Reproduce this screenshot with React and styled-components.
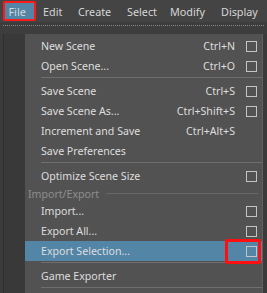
import React from "react";
import styled, { createGlobalStyle, css } from "styled-components";

const Global = createGlobalStyle`
  html, body { margin: 0; padding: 0; background: #3b3b3b; }
  body { font-family: "Noto Sans", "DejaVu Sans", sans-serif; font-size: 11px; color: #dcdcdc; overflow: hidden; }
`;

const Screen = styled.div`
  width: 267px;
  height: 293px;
  display: flex;
  flex-direction: column;
  background: #3b3b3b;
  overflow: hidden;
`;

const MenuBar = styled.div`
  height: 22px;
  background: #444444;
  display: flex;
  align-items: center;
  padding-left: 3px;
  flex: none;
`;

const Title = styled.div`
  height: 20px;
  box-sizing: border-box;
  display: flex;
  align-items: center;
  flex: none;
  width: ${(p) => (p.$w ? `${p.$w}px` : "auto")};
  font-size: 10.8px;
  color: #d6d6d6;
  white-space: nowrap;
  ${(p) =>
    p.$active &&
    css`
      background: #5285a6;
      border: 2.5px solid #ff1a1a;
      border-radius: 2px;
      padding-left: 3.5px;
      margin-right: 7px;
    `}
`;

const ToolStrip = styled.div`
  height: 12px;
  flex: none;
  background: #3d3d3d;
  padding: 3px 3px 0;
  box-sizing: border-box;
`;

const Dots = styled.div`
  border-top: 1px dotted #8a8a8a;
`;

const Body = styled.div`
  flex: 1;
  display: flex;
  min-height: 0;
`;

const Gutter = styled.div`
  width: 21px;
  margin-left: 3px;
  border-left: 1px solid #2f2f2f;
  background: #393939;
  flex: none;
`;

const Panel = styled.div`
  flex: 1;
  background: #525252;
  padding-top: 2px;
  display: flex;
  flex-direction: column;
`;

const Edge = styled.div`
  width: 4px;
  flex: none;
  background: #3a3a3a;
  border-left: 1px solid #5f5f5f;
`;

const Item = styled.div`
  height: 20px;
  flex: none;
  display: grid;
  grid-template-columns: 1fr auto 11px;
  align-items: center;
  padding: 0 5px 0 16px;
  column-gap: 11px;
  background: ${(p) => (p.$hl ? "#5285a6" : "transparent")};
  color: #dedede;
  font-size: 10.6px;
  white-space: nowrap;
`;

const Shortcut = styled.span`
  text-align: right;
`;

const BoxCell = styled.span`
  position: relative;
  width: 11px;
  height: 11px;
  ${(p) =>
    p.$marked &&
    css`
      &::after {
        content: "";
        position: absolute;
        left: -21px;
        right: -4px;
        top: -7px;
        bottom: -7px;
        border: 3px solid #ff1010;
        border-radius: 2px;
      }
    `}
`;

const Box = styled.span`
  display: block;
  box-sizing: border-box;
  width: 11px;
  height: 11px;
  border: 1px solid #c4c4c4;
`;

const Sep = styled.div`
  height: 5px;
  flex: none;
  margin-left: 16px;
  &::before {
    content: "";
    display: block;
    margin-top: 1px;
    height: 1px;
    background: #6e6e6e;
  }
`;

const Header = styled.div`
  height: 15px;
  flex: none;
  display: flex;
  align-items: center;
  gap: 7px;
  padding: 0 4px 0 3px;
  color: #8e8e8e;
  font-size: 10.6px;
  &::after {
    content: "";
    flex: 1;
    height: 1px;
    background: #666;
  }
`;

const menu = [
  ["File", 33],
  ["Edit", 35],
  ["Create", 49],
  ["Select", 43],
  ["Modify", 51],
  ["Display", 0],
];

const rows = [
  { t: "item", label: "New Scene", sc: "Ctrl+N", box: true },
  { t: "item", label: "Open Scene...", sc: "Ctrl+O", box: true },
  { t: "sep" },
  { t: "item", label: "Save Scene", sc: "Ctrl+S", box: true },
  { t: "item", label: "Save Scene As...", sc: "Ctrl+Shift+S", box: true },
  { t: "item", label: "Increment and Save", sc: "Ctrl+Alt+S" },
  { t: "item", label: "Save Preferences" },
  { t: "sep" },
  { t: "item", label: "Optimize Scene Size", box: true },
  { t: "head", label: "Import/Export" },
  { t: "item", label: "Import...", box: true },
  { t: "item", label: "Export All...", box: true },
  { t: "item", label: "Export Selection...", box: true, hl: true, mark: true },
  { t: "sep" },
  { t: "item", label: "Game Exporter" },
  { t: "sep" },
];

export default function App() {
  return (
    <Screen>
      <Global />
      <MenuBar>
        {menu.map(([m, w], i) => (
          <Title key={m} $active={i === 0} $w={w}>
            {m}
          </Title>
        ))}
      </MenuBar>
      <ToolStrip>
        <Dots />
      </ToolStrip>
      <Body>
        <Gutter />
        <Panel>
          {rows.map((r, i) => {
            if (r.t === "sep") return <Sep key={i} />;
            if (r.t === "head") return <Header key={i}>{r.label}</Header>;
            return (
              <Item key={i} $hl={r.hl}>
                <span>{r.label}</span>
                <Shortcut>{r.sc || ""}</Shortcut>
                <BoxCell $marked={r.mark}>{r.box && <Box />}</BoxCell>
              </Item>
            );
          })}
        </Panel>
        <Edge />
      </Body>
    </Screen>
  );
}
